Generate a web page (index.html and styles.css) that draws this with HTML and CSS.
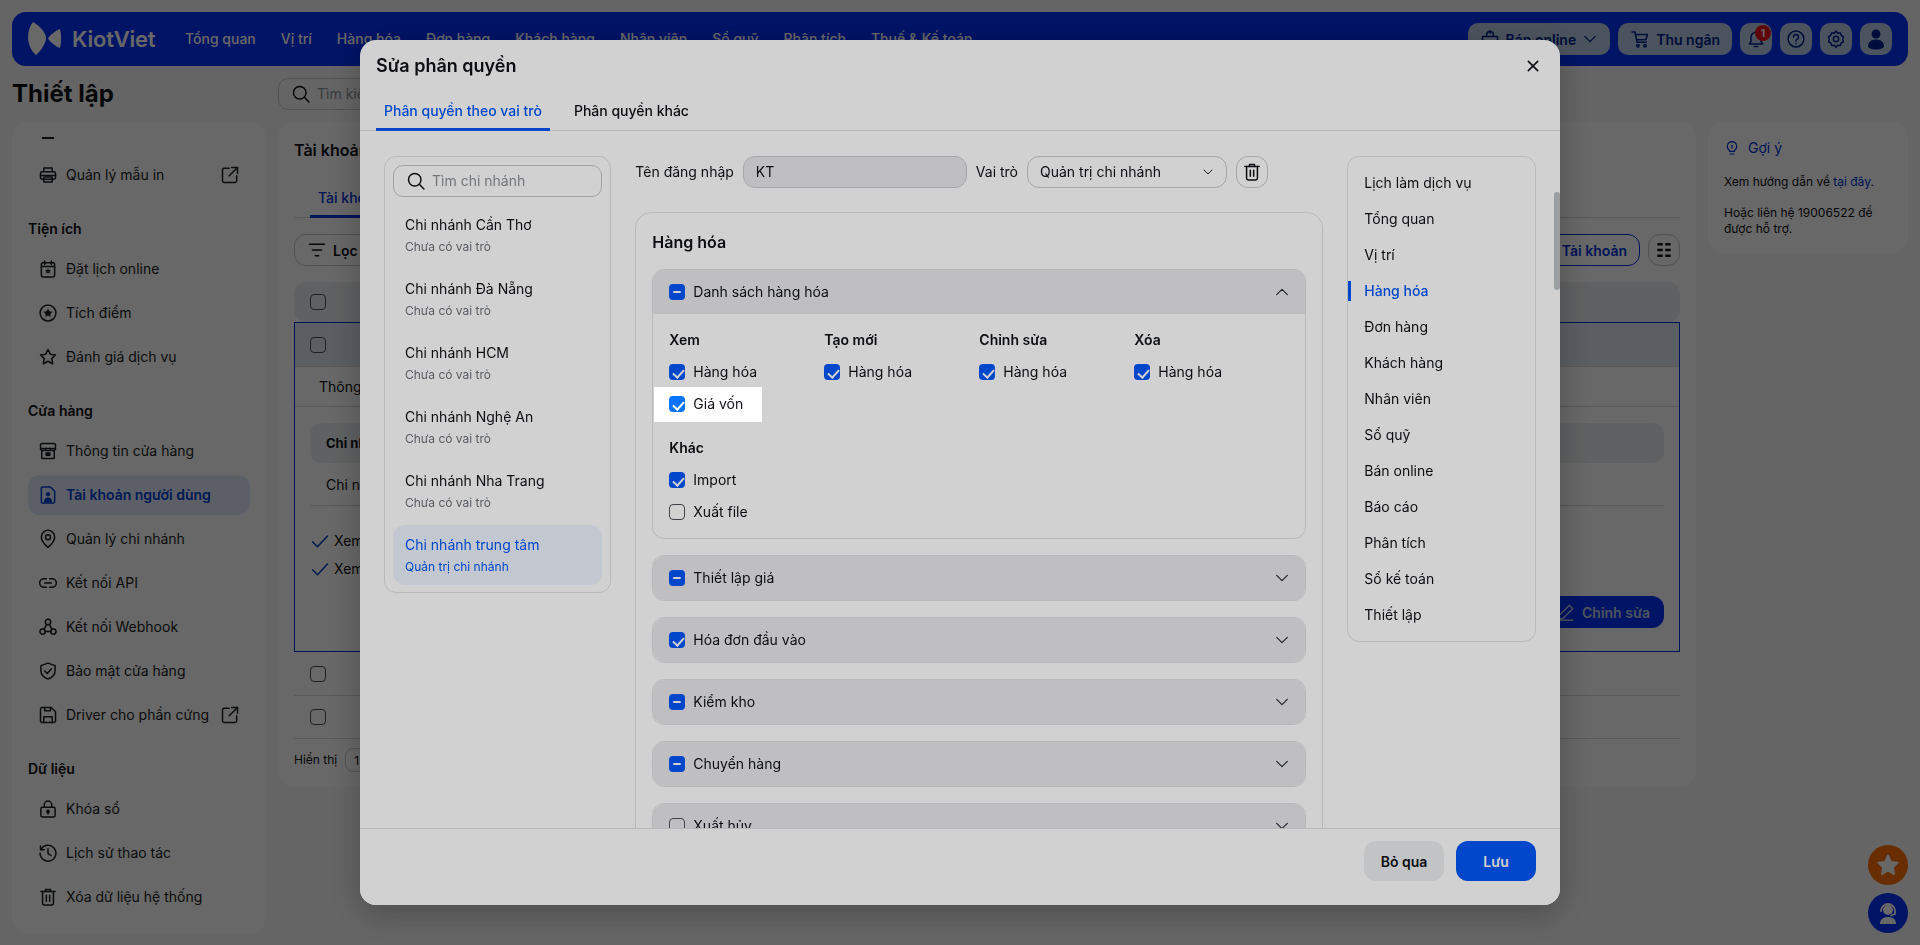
FILE: index.html
```html
<!DOCTYPE html>
<html lang="vi">

<head>
    <meta charset="UTF-8">
    <title>Thiết lập - Tài khoản người dùng</title>
    <link rel="stylesheet" href="styles.css">
</head>

<body>
    <svg class="defs" xmlns="http://www.w3.org/2000/svg">
        <symbol id="i-search" viewBox="0 0 24 24"><circle cx="10.5" cy="10.5" r="7.5"/><path d="M16 16l5.5 5.5"/></symbol>
        <symbol id="i-printer" viewBox="0 0 24 24"><path d="M7 8V3.5h10V8"/><rect x="3" y="8" width="18" height="9" rx="2"/><path d="M3 12.5h18"/><path d="M7 14.5h10v6H7z"/></symbol>
        <symbol id="i-external" viewBox="0 0 24 24"><path d="M11 4H5a2 2 0 0 0-2 2v13a2 2 0 0 0 2 2h13a2 2 0 0 0 2-2v-6"/><path d="M14 3h7v7"/><path d="M21 3L11 13"/></symbol>
        <symbol id="i-calendar" viewBox="0 0 24 24"><rect x="4" y="4.5" width="16" height="17" rx="2"/><path d="M4 9h16"/><path d="M8 2.5v4M16 2.5v4"/><path fill="currentColor" stroke="none" d="M12 11l1.1 2.3 2.5.3-1.8 1.7.5 2.5-2.3-1.2-2.3 1.2.5-2.5-1.8-1.7 2.5-.3z"/></symbol>
        <symbol id="i-star-circle" viewBox="0 0 24 24"><circle cx="12" cy="12" r="9.5"/><path fill="currentColor" stroke="none" d="M12 6.5l1.7 3.5 3.8.5-2.8 2.6.7 3.8-3.4-1.9-3.4 1.9.7-3.8-2.8-2.6 3.8-.5z"/></symbol>
        <symbol id="i-star" viewBox="0 0 24 24"><path d="M12 3l2.8 5.8 6.2.8-4.6 4.3 1.2 6.3-5.6-3.1-5.6 3.1 1.2-6.3L3 9.6l6.2-.8z"/></symbol>
        <symbol id="i-store" viewBox="0 0 24 24"><rect x="3" y="3" width="18" height="6" rx="1.5"/><path d="M3 9c0 2 2 2.5 3 2.5S9 11 9 9.5c0 1.5 2 2 3 2s3-.5 3-2c0 1.5 2 2 3 2s3-.5 3-2.5"/><path d="M4.5 11v9a1 1 0 0 0 1 1h13a1 1 0 0 0 1-1v-9"/><path fill="currentColor" stroke="none" d="M9 13.5h6v4.5H9z"/></symbol>
        <symbol id="i-user-file" viewBox="0 0 24 24"><path d="M5 2.5h10l5 5V20a1.5 1.5 0 0 1-1.500 1.500h-13.500a1 1 0 0 1-1-1V3.500a1 1 0 0 1 1-1z"/><circle cx="12" cy="11" r="2.600" fill="currentColor" stroke="none"/><path fill="currentColor" stroke="none" d="M7 21c0-4 2-6 5-6s5 2 5 6z"/></symbol>
        <symbol id="i-pin" viewBox="0 0 24 24"><path d="M12 22s-8-7-8-12.500a8 8 0 0 1 16 0C20 15 12 22 12 22z"/><circle cx="12" cy="10" r="3"/></symbol>
        <symbol id="i-link" viewBox="0 0 24 24"><path d="M10 7H7a5 5 0 0 0 0 10h3"/><path d="M14 7h3a5 5 0 0 1 0 10h-3"/><path d="M8 12h8"/></symbol>
        <symbol id="i-webhook" viewBox="0 0 24 24"><circle cx="12" cy="6" r="3.200"/><circle cx="5.500" cy="17.500" r="3.200"/><circle cx="18.500" cy="17.500" r="3.200"/><path d="M10.500 9l-3.500 6M13.500 9l3.500 6M8.500 17.500h7"/></symbol>
        <symbol id="i-shield" viewBox="0 0 24 24"><path d="M12 2.500l8.500 3v6c0 5-3.500 8.500-8.500 10-5-1.500-8.500-5-8.500-10v-6z"/><path d="M8 12l3 3 5-5.500"/></symbol>
        <symbol id="i-save" viewBox="0 0 24 24"><path d="M5 3h11l5 5v11a2 2 0 0 1-2 2H5a2 2 0 0 1-2-2V5a2 2 0 0 1 2-2z"/><path d="M7 21v-7h10v7"/><path d="M8 3v4h7V3"/></symbol>
        <symbol id="i-lock" viewBox="0 0 24 24"><rect x="3.500" y="10" width="17" height="11.500" rx="1.500"/><path d="M7.500 10V7a4.500 4.500 0 0 1 9 0v3"/><circle cx="12" cy="15" r="1.500" fill="currentColor"/><path d="M12 15v3"/></symbol>
        <symbol id="i-history" viewBox="0 0 24 24"><path d="M3.500 8A9.500 9.500 0 1 1 2.500 12"/><path d="M3 3.500V8h4.500"/><path d="M12 7v5.500l3.500 2.500"/></symbol>
        <symbol id="i-trash" viewBox="0 0 24 24"><path d="M3.500 5.500h17"/><path d="M9 5.500V3h6v2.500"/><path d="M5.500 5.500v14a2 2 0 0 0 2 2h9a2 2 0 0 0 2-2v-14"/><path d="M10 10v7M14 10v7"/></symbol>
        <symbol id="i-filter" viewBox="0 0 24 24"><path d="M3 5h18M6.500 12h11M10 19h4"/></symbol>
        <symbol id="i-grid" viewBox="0 0 24 24"><path d="M4 5h6.500M13.500 5H20M4 12h6.500M13.500 12H20M4 19h6.500M13.500 19H20" stroke-width="3" stroke-linecap="butt"/></symbol>
        <symbol id="i-chevron-down" viewBox="0 0 24 24"><path d="M4 8l8 8 8-8"/></symbol>
        <symbol id="i-chevron-up" viewBox="0 0 24 24"><path d="M4 16l8-8 8 8"/></symbol>
        <symbol id="i-bulb" viewBox="0 0 24 24"><path d="M12 2.500a7 7 0 0 0-4 12.700V17h8v-1.800a7 7 0 0 0-4-12.700z"/><path d="M9 21h6"/><path d="M12 8v4"/></symbol>
        <symbol id="i-pen" viewBox="0 0 24 24"><path d="M4 16L16 4l4 4L8 20H4z"/><path d="M4 22h16"/></symbol>
        <symbol id="i-check" viewBox="0 0 24 24"><path d="M3 13l6 6L21 6"/></symbol>
        <symbol id="i-bag" viewBox="0 0 24 24"><path d="M3 9h18v10a2 2 0 0 1-2 2H5a2 2 0 0 1-2-2z"/><path d="M8 9V7a4 4 0 0 1 8 0v2"/><path d="M12 2v3"/></symbol>
        <symbol id="i-cart" viewBox="0 0 24 24"><path d="M2.500 3.500H6l2.500 12.500h11"/><path d="M6.500 6.500H21l-2 6.500H8"/><circle cx="9.500" cy="20" r="1.500"/><circle cx="18" cy="20" r="1.500"/></symbol>
        <symbol id="i-bell" viewBox="0 0 24 24"><path d="M6 10a6 6 0 0 1 12 0v5l2 3H4l2-3z"/><path d="M10 21h4"/></symbol>
        <symbol id="i-help" viewBox="0 0 24 24"><circle cx="12" cy="12" r="9.500"/><path d="M9 9.500a3 3 0 1 1 4.500 2.600c-1 .6-1.500 1.200-1.500 2.400"/><path d="M12 17.500v.1"/></symbol>
        <symbol id="i-gear" viewBox="0 0 24 24"><path d="M12 2.500l2 2.500 3.200-.4 1 3 2.800 1.700-1 3 1 3-2.800 1.600-1 3-3.200-.4-2 2.500-2-2.500-3.200.4-1-3L3 15.300l1-3-1-3 2.800-1.700 1-3L10 5z"/><circle cx="12" cy="12" r="3.200"/></symbol>
        <symbol id="i-user" viewBox="0 0 24 24"><circle cx="12" cy="7" r="4.500" fill="currentColor" stroke="none"/><path fill="currentColor" stroke="none" d="M4 19c0-4 3.500-6.500 8-6.500s8 2.500 8 6.500c0 2-3.500 3.500-8 3.500S4 21 4 19z"/></symbol>
        <symbol id="i-close" viewBox="0 0 24 24"><path d="M5 5l14 14M19 5L5 19"/></symbol>
        <symbol id="i-solid-star" viewBox="0 0 24 24"><path fill="currentColor" stroke="currentColor" d="M12 2.500l3 6.300 6.800.9-5 4.700 1.300 6.800-6.100-3.400-6.100 3.400 1.300-6.800-5-4.700 6.800-.9z"/></symbol>
        <symbol id="i-headset" viewBox="0 0 24 24"><circle cx="12" cy="9" r="5" fill="currentColor" stroke="none"/><path d="M5 10a7 7 0 0 1 14 0M19 10v3l-4 1.500"/><path fill="currentColor" stroke="none" d="M4 23c0-4.500 3-7 8-7s8 2.500 8 7z"/></symbol>
    </svg>

    <header class="topbar">
        <div class="logo">
            <svg width="34" height="34" viewBox="0 0 34 34"><path fill="currentColor" d="M5 0C-2 8-2 25 8 33c6-5 10-13 10-17C18 11 12 4 5 0z"/><path fill="currentColor" d="M32 7c-5 2-10 6-12 9.500 2 3.500 7 7.500 12 9.500 1.500-6 1.500-13 0-19z"/></svg>
            <span class="logo-name">KiotViet</span>
        </div>
        <nav class="topnav">
            <a>Tổng quan</a>
            <a>Vị trí</a>
            <a>Hàng hóa</a>
            <a>Đơn hàng</a>
            <a>Khách hàng</a>
            <a>Nhân viên</a>
            <a>Sổ quỹ</a>
            <a>Phân tích</a>
            <a>Thuế &amp; Kế toán</a>
        </nav>
        <div class="top-actions">
            <button class="top-btn"><svg class="ico i20"><use href="#i-bag"/></svg>Bán online<svg class="ico i16"><use href="#i-chevron-down"/></svg></button>
            <button class="top-btn"><svg class="ico i20"><use href="#i-cart"/></svg>Thu ngân</button>
            <button class="top-btn square bell"><svg class="ico i20"><use href="#i-bell"/></svg><span class="badge">1</span></button>
            <button class="top-btn square"><svg class="ico i20"><use href="#i-help"/></svg></button>
            <button class="top-btn square"><svg class="ico i20"><use href="#i-gear"/></svg></button>
            <button class="top-btn square"><svg class="ico i24"><use href="#i-user"/></svg></button>
        </div>
    </header>

    <div class="layout">
        <h1 class="page-title">Thiết lập</h1>
        <div class="page-search">
            <label class="searchbox"><svg class="ico i20"><use href="#i-search"/></svg><span class="placeholder">Tìm kiếm</span></label>
        </div>
        <div class="hint-slot"></div>

        <aside class="sidebar">
            <div class="cut-off"></div>
            <a class="side-item"><svg class="ico i20"><use href="#i-printer"/></svg><span class="grow">Quản lý mẫu in</span><svg class="ico i20"><use href="#i-external"/></svg></a>

            <h2 class="side-title">Tiện ích</h2>
            <a class="side-item"><svg class="ico i20"><use href="#i-calendar"/></svg>Đặt lịch online</a>
            <a class="side-item"><svg class="ico i20"><use href="#i-star-circle"/></svg>Tích điểm</a>
            <a class="side-item"><svg class="ico i20"><use href="#i-star"/></svg>Đánh giá dịch vụ</a>

            <h2 class="side-title">Cửa hàng</h2>
            <a class="side-item"><svg class="ico i20"><use href="#i-store"/></svg>Thông tin cửa hàng</a>
            <a class="side-item active"><svg class="ico i20"><use href="#i-user-file"/></svg>Tài khoản người dùng</a>
            <a class="side-item"><svg class="ico i20"><use href="#i-pin"/></svg>Quản lý chi nhánh</a>
            <a class="side-item"><svg class="ico i20"><use href="#i-link"/></svg>Kết nối API</a>
            <a class="side-item"><svg class="ico i20"><use href="#i-webhook"/></svg>Kết nối Webhook</a>
            <a class="side-item"><svg class="ico i20"><use href="#i-shield"/></svg>Bảo mật cửa hàng</a>
            <a class="side-item"><svg class="ico i20"><use href="#i-save"/></svg><span class="grow">Driver cho phần cứng</span><svg class="ico i20"><use href="#i-external"/></svg></a>

            <h2 class="side-title">Dữ liệu</h2>
            <a class="side-item"><svg class="ico i20"><use href="#i-lock"/></svg>Khóa sổ</a>
            <a class="side-item"><svg class="ico i20"><use href="#i-history"/></svg>Lịch sử thao tác</a>
            <a class="side-item"><svg class="ico i20"><use href="#i-trash"/></svg>Xóa dữ liệu hệ thống</a>
        </aside>

        <main class="main-card">
            <h2 class="card-title">Tài khoản</h2>
            <div class="card-tabs"><a class="card-tab">Tài khoản</a></div>
            <div class="toolbar">
                <button class="tool-btn"><svg class="ico i20"><use href="#i-filter"/></svg>Lọc</button>
                <button class="tool-btn outline"><svg class="ico i20"><use href="#i-pen"/></svg>Tài khoản</button>
                <button class="tool-btn icon-only"><svg class="ico i20"><use href="#i-grid"/></svg></button>
            </div>
            <div class="table-head"><span class="cb"></span></div>
            <section class="open-row">
                <div class="open-head"><span class="cb"></span></div>
                <div class="open-tabs">Thông tin</div>
                <div class="open-body">
                    <div class="sub-head">Chi nhánh</div>
                    <div class="sub-row">Chi nhánh trung tâm</div>
                    <div class="perm"><svg class="ico i20 blue"><use href="#i-check"/></svg>Xem</div>
                    <div class="perm"><svg class="ico i20 blue"><use href="#i-check"/></svg>Xem</div>
                    <div class="open-actions"><button class="edit-btn"><svg class="ico i20"><use href="#i-pen"/></svg>Chỉnh sửa</button></div>
                </div>
            </section>
            <div class="table-row"><span class="cb"></span></div>
            <div class="table-row"><span class="cb"></span></div>
            <div class="pager">Hiển thị<span class="pager-select">15</span></div>
        </main>

        <aside class="hint-card">
            <div class="hint-head"><svg class="ico i16"><use href="#i-bulb"/></svg>Gợi ý</div>
            <p>Xem hướng dẫn về <a>tại đây</a>.</p>
            <p>Hoặc liên hệ 19006522 để được hỗ trợ.</p>
        </aside>
    </div>

    <button class="float-btn orange"><svg class="ico i24"><use href="#i-solid-star"/></svg></button>
    <button class="float-btn navy"><svg class="ico i24"><use href="#i-headset"/></svg></button>

    <div class="backdrop">
        <div class="modal">
            <div class="modal-head">
                <h3>Sửa phân quyền</h3>
                <svg class="ico i16 close"><use href="#i-close"/></svg>
            </div>
            <div class="modal-tabs">
                <a class="modal-tab active">Phân quyền theo vai trò</a>
                <a class="modal-tab">Phân quyền khác</a>
            </div>

            <div class="modal-body">
                <div class="branches">
                    <label class="searchbox"><svg class="ico i20"><use href="#i-search"/></svg><span class="placeholder">Tìm chi nhánh</span></label>
                    <a class="branch"><b>Chi nhánh Cần Thơ</b><small>Chưa có vai trò</small></a>
                    <a class="branch"><b>Chi nhánh Đà Nẵng</b><small>Chưa có vai trò</small></a>
                    <a class="branch"><b>Chi nhánh HCM</b><small>Chưa có vai trò</small></a>
                    <a class="branch"><b>Chi nhánh Nghệ An</b><small>Chưa có vai trò</small></a>
                    <a class="branch"><b>Chi nhánh Nha Trang</b><small>Chưa có vai trò</small></a>
                    <a class="branch active"><b>Chi nhánh trung tâm</b><small>Quản trị chi nhánh</small></a>
                </div>

                <div class="perms">
                    <div class="user-row">
                        <span>Tên đăng nhập</span>
                        <div class="field readonly">KT</div>
                        <span>Vai trò</span>
                        <div class="field select">Quản trị chi nhánh<svg class="ico i12"><use href="#i-chevron-down"/></svg></div>
                        <button class="trash-btn"><svg class="ico i20"><use href="#i-trash"/></svg></button>
                    </div>

                    <div class="perm-panel">
                        <h4>Hàng hóa</h4>
                        <div class="accordion">
                            <div class="acc-head"><span class="cb part"></span>Danh sách hàng hóa<svg class="ico i16 chev"><use href="#i-chevron-up"/></svg></div>
                            <div class="acc-body">
                                <div class="perm-cols">
                                    <div class="perm-col">
                                        <h5>Xem</h5>
                                        <div class="check"><span class="cb on"></span>Hàng hóa</div>
                                        <div class="check spotlight"><span class="cb on"></span>Giá vốn</div>
                                    </div>
                                    <div class="perm-col">
                                        <h5>Tạo mới</h5>
                                        <div class="check"><span class="cb on"></span>Hàng hóa</div>
                                    </div>
                                    <div class="perm-col">
                                        <h5>Chỉnh sửa</h5>
                                        <div class="check"><span class="cb on"></span>Hàng hóa</div>
                                    </div>
                                    <div class="perm-col">
                                        <h5>Xóa</h5>
                                        <div class="check"><span class="cb on"></span>Hàng hóa</div>
                                    </div>
                                </div>
                                <div class="perm-col other">
                                    <h5>Khác</h5>
                                    <div class="check"><span class="cb on"></span>Import</div>
                                    <div class="check"><span class="cb"></span>Xuất file</div>
                                </div>
                            </div>
                        </div>
                        <div class="accordion"><div class="acc-head"><span class="cb part"></span>Thiết lập giá<svg class="ico i16 chev"><use href="#i-chevron-down"/></svg></div></div>
                        <div class="accordion"><div class="acc-head"><span class="cb on"></span>Hóa đơn đầu vào<svg class="ico i16 chev"><use href="#i-chevron-down"/></svg></div></div>
                        <div class="accordion"><div class="acc-head"><span class="cb part"></span>Kiểm kho<svg class="ico i16 chev"><use href="#i-chevron-down"/></svg></div></div>
                        <div class="accordion"><div class="acc-head"><span class="cb part"></span>Chuyển hàng<svg class="ico i16 chev"><use href="#i-chevron-down"/></svg></div></div>
                        <div class="accordion"><div class="acc-head"><span class="cb"></span>Xuất hủy<svg class="ico i16 chev"><use href="#i-chevron-down"/></svg></div></div>
                    </div>
                </div>

                <nav class="anchors">
                    <a>Lịch làm dịch vụ</a>
                    <a>Tổng quan</a>
                    <a>Vị trí</a>
                    <a class="active">Hàng hóa</a>
                    <a>Đơn hàng</a>
                    <a>Khách hàng</a>
                    <a>Nhân viên</a>
                    <a>Sổ quỹ</a>
                    <a>Bán online</a>
                    <a>Báo cáo</a>
                    <a>Phân tích</a>
                    <a>Sổ kế toán</a>
                    <a>Thiết lập</a>
                </nav>

                <div class="scroll-thumb"></div>
            </div>

            <div class="modal-foot">
                <button class="btn gray">Bỏ qua</button>
                <button class="btn primary">Lưu</button>
            </div>
        </div>
    </div>
</body>

</html>
```

FILE: styles.css
```css
* {
    box-sizing: border-box;
}
html, body {
    height: 945px;
    margin: 0;
    overflow: hidden;
}
body {
    background-color: #f8f9f9;
    color: #0f1115;
    font-family: Inter, "Noto Sans", sans-serif;
    font-size: 14px;
    line-height: 20px;
    padding: 12px;
}
h1, h2, h3, h4, h5, p {
    margin: 0;
}
button {
    border: none;
    font-family: inherit;
    cursor: pointer;
}
.defs {
    display: none;
}
.ico {
    fill: none;
    stroke: currentColor;
    stroke-width: 1.8;
    stroke-linecap: round;
    stroke-linejoin: round;
    flex: none;
}
.i12 { width: 12px; height: 12px; }
.i16 { width: 16px; height: 16px; }
.i20 { width: 20px; height: 20px; }
.i24 { width: 24px; height: 24px; }
.blue { color: #0040c8; }
.grow { flex: 1; }

/* top bar */
.topbar {
    display: flex;
    align-items: center;
    height: 54px;
    padding: 0 16px;
    border-radius: 14px;
    background-color: #0032f8;
    color: #fff;
}
.logo {
    display: flex;
    align-items: center;
    gap: 10px;
    width: 157px;
}
.logo-name {
    font-size: 22px;
    font-weight: 600;
    letter-spacing: -0.2px;
}
.topnav {
    display: flex;
    gap: 25px;
    font-weight: 500;
}
.top-actions {
    display: flex;
    gap: 8px;
    margin-left: auto;
}
.top-btn {
    display: flex;
    align-items: center;
    gap: 6px;
    height: 32px;
    padding: 0 12px;
    border-radius: 10px;
    background-color: #b9cfe6;
    color: #00208f;
    font-size: 14px;
    font-weight: 600;
    position: relative;
}
.top-btn.square {
    width: 32px;
    padding: 0;
    justify-content: center;
}
.badge {
    position: absolute;
    top: 2px;
    right: 1px;
    width: 16px;
    height: 16px;
    border-radius: 50%;
    background-color: #e8101c;
    color: #fff;
    font-size: 10px;
    font-weight: 700;
    line-height: 16px;
    text-align: center;
}

/* page grid */
.layout {
    display: grid;
    grid-template-columns: 254px 1fr 200px;
    grid-template-rows: 32px auto;
    gap: 12px;
    margin-top: 12px;
    align-items: start;
}
.page-title {
    font-size: 24px;
    font-weight: 700;
    line-height: 32px;
}
.searchbox {
    display: flex;
    align-items: center;
    gap: 6px;
    height: 32px;
    padding: 0 12px;
    border: 1px solid #c5c8cc;
    border-radius: 10px;
}
.placeholder {
    color: #8b9096;
}
.page-search .searchbox {
    width: 320px;
}

/* sidebar */
.sidebar {
    height: 811px;
    padding: 15px 16px 16px;
    border-radius: 16px;
    background-color: #fff;
}
.cut-off {
    width: 12px;
    height: 2px;
    margin: 0 0 16px 14px;
    background-color: #1b1e23;
}
.side-title {
    margin: 24px 0 10px;
    font-size: 14px;
    font-weight: 600;
}
.side-item {
    display: flex;
    align-items: center;
    gap: 8px;
    height: 40px;
    margin-bottom: 4px;
    padding: 0 10px;
    border-radius: 12px;
    color: #1b1e23;
}
.side-item.active {
    background-color: #e2eafa;
    color: #0040d0;
    font-weight: 600;
}

/* main card */
.main-card {
    height: 665px;
    padding: 16px;
    border-radius: 16px;
    background-color: #fff;
}
.card-title {
    font-size: 16px;
    font-weight: 600;
    line-height: 24px;
}
.card-tabs {
    margin-top: 16px;
    height: 40px;
    padding-left: 16px;
    border-bottom: 1px solid #d8dadd;
}
.card-tab {
    display: inline-block;
    height: 40px;
    padding: 10px 8px;
    border-bottom: 3px solid #0032d8;
    color: #0032d8;
    font-weight: 500;
}
.toolbar {
    display: flex;
    align-items: center;
    gap: 8px;
    margin-top: 16px;
}
.tool-btn {
    display: flex;
    align-items: center;
    gap: 6px;
    height: 32px;
    padding: 0 12px;
    border: 1px solid #c5c8cc;
    border-radius: 12px;
    background: none;
    color: #0f1115;
    font-size: 14px;
    font-weight: 600;
}
.tool-btn.outline {
    margin-left: auto;
    border-color: #0032d8;
    color: #0032d8;
}
.tool-btn.icon-only {
    width: 32px;
    padding: 0;
    justify-content: center;
}
.table-head {
    display: flex;
    align-items: center;
    height: 40px;
    margin-top: 16px;
    padding: 0 16px;
    border-radius: 12px;
    background-color: #eceef0;
}
.open-row {
    height: 330px;
    border: 1px solid #0032d8;
}
.open-head {
    display: flex;
    align-items: center;
    height: 44px;
    padding: 0 15px;
    border-bottom: 1px solid #d8dadd;
    background-color: #dfe8f5;
}
.open-tabs {
    height: 40px;
    padding: 10px 24px;
    border-bottom: 1px solid #d8dadd;
}
.open-body {
    padding: 16px 15px;
}
.sub-head {
    height: 40px;
    padding: 10px 16px;
    border-radius: 12px;
    background-color: #eceef0;
    font-size: 13px;
    font-weight: 700;
}
.sub-row {
    height: 43px;
    padding: 12px 16px;
    border-bottom: 1px solid #d8dadd;
}
.perm {
    display: flex;
    align-items: center;
    gap: 4px;
    height: 28px;
    position: relative;
    top: 21px;
}
.open-actions {
    display: flex;
    justify-content: flex-end;
    margin-top: 34px;
}
.edit-btn {
    display: flex;
    align-items: center;
    gap: 6px;
    height: 32px;
    padding: 0 14px;
    border-radius: 12px;
    background-color: #0032f8;
    color: #b9cfe6;
    font-size: 14px;
    font-weight: 600;
}
.table-row {
    display: flex;
    align-items: center;
    height: 44px;
    padding: 0 16px;
    border-bottom: 1px solid #d8dadd;
}
.table-row + .table-row {
    height: 43px;
}
.pager {
    display: flex;
    align-items: center;
    gap: 8px;
    margin-top: 9px;
    font-size: 12px;
}
.pager-select {
    width: 60px;
    height: 24px;
    padding: 2px 8px;
    border: 1px solid #c5c8cc;
    border-radius: 8px;
}

/* hint */
.hint-card {
    padding: 16px;
    border-radius: 16px;
    background-color: #fff;
    font-size: 12px;
    line-height: 16px;
}
.hint-card p + p {
    margin-top: 15px;
}
.hint-card a {
    color: #0032d8;
}
.hint-head {
    display: flex;
    align-items: center;
    gap: 8px;
    height: 20px;
    margin-bottom: 16px;
    color: #0032d8;
    font-size: 14px;
}

/* floating buttons */
.float-btn {
    position: fixed;
    right: 12px;
    display: flex;
    align-items: center;
    justify-content: center;
    width: 40px;
    height: 40px;
    border-radius: 50%;
    color: #fff;
}
.float-btn.orange {
    bottom: 60px;
    background-color: #ff7000;
}
.float-btn.navy {
    bottom: 12px;
    background-color: #0032f8;
}

/* modal */
.backdrop {
    position: fixed;
    inset: 0;
    display: flex;
    align-items: center;
    justify-content: center;
    background-color: rgba(0, 0, 0, 0.5);
}
.modal {
    display: flex;
    flex-direction: column;
    width: 1200px;
    height: 865px;
    border-radius: 16px;
    background-color: #fff;
    box-shadow: 0 8px 32px rgba(0, 0, 0, 0.25);
}
.modal-head {
    display: flex;
    align-items: center;
    justify-content: space-between;
    height: 52px;
    padding: 0 19px 0 16px;
}
.modal-head h3 {
    font-size: 18px;
    font-weight: 600;
}
.modal-head .close {
    color: #0f1115;
    stroke-width: 2.4;
}
.modal-tabs {
    display: flex;
    gap: 16px;
    height: 39px;
    padding: 0 16px;
    border-bottom: 1px solid #e1e2e4;
}
.modal-tab {
    height: 39px;
    padding: 9px 8px 0;
    font-weight: 500;
}
.modal-tab.active {
    border-bottom: 3px solid #0057f8;
    color: #0057f8;
}
.modal-body {
    position: relative;
    display: flex;
    gap: 24px;
    flex: 1;
    min-height: 0;
    padding: 25px 24px 0;
}
.branches {
    width: 240px;
    height: 437px;
    padding: 8px;
    border: 1px solid #e1e2e4;
    border-radius: 12px;
}
.branches .searchbox {
    margin-bottom: 8px;
}
.branch {
    display: block;
    height: 60px;
    margin-bottom: 4px;
    padding: 10px 12px;
    border-radius: 12px;
}
.branch:last-child {
    margin-bottom: 0;
}
.branch b {
    display: block;
    font-weight: 400;
}
.branch small {
    display: block;
    color: #6d7278;
    font-size: 12px;
    line-height: 20px;
    margin-top: 2px;
}
.branch.active {
    background-color: #eef3fd;
}
.branch.active b, .branch.active small {
    color: #0057f8;
}
.perms {
    flex: 1;
}
.user-row {
    display: flex;
    align-items: center;
    gap: 9px;
    height: 32px;
    margin-bottom: 24px;
}
.field {
    display: flex;
    align-items: center;
    height: 32px;
    padding: 0 12px;
    border: 1px solid #c9cbce;
    border-radius: 12px;
}
.field.readonly {
    width: 224px;
    background-color: #e9eaec;
}
.field.select {
    width: 200px;
    justify-content: space-between;
    margin-left: 0;
}
.trash-btn {
    display: flex;
    align-items: center;
    justify-content: center;
    width: 32px;
    height: 32px;
    border: 1px solid #c9cbce;
    border-radius: 12px;
    background: none;
    color: #0f1115;
}
.perm-panel {
    height: 650px;
    padding: 17px 16px 0;
    border: 1px solid #e1e2e4;
    border-radius: 16px;
}
.perm-panel h4 {
    margin-bottom: 15px;
    font-size: 16px;
    font-weight: 600;
    line-height: 24px;
}
.accordion {
    margin-bottom: 16px;
    border: 1px solid #e1e2e4;
    border-radius: 12px;
}
.acc-head {
    display: flex;
    align-items: center;
    gap: 8px;
    height: 44px;
    padding: 0 16px;
    border-radius: 12px;
    background-color: #e9eaec;
}
.accordion:first-of-type .acc-head {
    border-radius: 11px 11px 0 0;
}
.acc-head .chev {
    margin-left: auto;
    margin-right: -1px;
    color: #2a2d33;
}
.acc-body {
    padding: 16px;
}
.perm-cols {
    display: grid;
    grid-template-columns: repeat(4, 155px);
}
.perm-col h5 {
    margin-bottom: 12px;
    font-size: 14px;
    font-weight: 600;
}
.perm-col.other {
    margin-top: 24px;
}
.check {
    display: flex;
    align-items: center;
    gap: 8px;
    height: 20px;
    margin-top: 12px;
}
.check:first-of-type {
    margin-top: 0;
}
.cb {
    position: relative;
    display: inline-block;
    flex: none;
    width: 16px;
    height: 16px;
    border: 1.5px solid #4e5257;
    border-radius: 4px;
}
.cb.on, .cb.part {
    border: none;
    background-color: #0057f8;
}
.cb.on::after {
    content: "";
    position: absolute;
    left: 5.5px;
    top: 2.5px;
    width: 5px;
    height: 9px;
    border: solid #fff;
    border-width: 0 2px 2px 0;
    transform: rotate(42deg);
}
.cb.part::after {
    content: "";
    position: absolute;
    left: 4px;
    top: 7px;
    width: 8px;
    height: 2px;
    border-radius: 1px;
    background-color: #fff;
}
.spotlight {
    position: relative;
    z-index: 20;
    width: 108px;
    height: 35px;
    margin: 5px 0 -8px -15px;
    padding: 7px 0 8px 15px;
    background-color: #fff;
    box-shadow: 0 0 0 3000px rgba(0, 0, 0, 0.18);
}
.spotlight .cb.on {
    background-color: #0a74ff;
}
.anchors {
    display: flex;
    flex-direction: column;
    width: 200px;
    height: 486px;
    padding: 8px 0;
    border: 1px solid #e1e2e4;
    border-radius: 12px;
}
.anchors a {
    position: relative;
    height: 36px;
    padding: 8px 16px;
}
.anchors a.active {
    color: #0057f8;
    font-weight: 500;
}
.anchors a.active::before {
    content: "";
    position: absolute;
    left: 0;
    top: 8px;
    width: 3px;
    height: 20px;
    background-color: #0057f8;
}
.scroll-thumb {
    position: absolute;
    right: 0;
    top: 61px;
    width: 6px;
    height: 98px;
    border-radius: 3px;
    background-color: #bcc3c9;
}
.modal-foot {
    position: relative;
    z-index: 5;
    display: flex;
    justify-content: flex-end;
    gap: 12px;
    height: 77px;
    padding: 12px 24px;
    border-top: 1px solid #e1e2e4;
    border-radius: 0 0 16px 16px;
    background-color: #fff;
}
.btn {
    width: 80px;
    height: 40px;
    border-radius: 12px;
    font-size: 14px;
    font-weight: 600;
}
.btn.gray {
    background-color: #eceef0;
    color: #0f1115;
}
.btn.primary {
    background-color: #0057f8;
    color: #fff;
}
```
